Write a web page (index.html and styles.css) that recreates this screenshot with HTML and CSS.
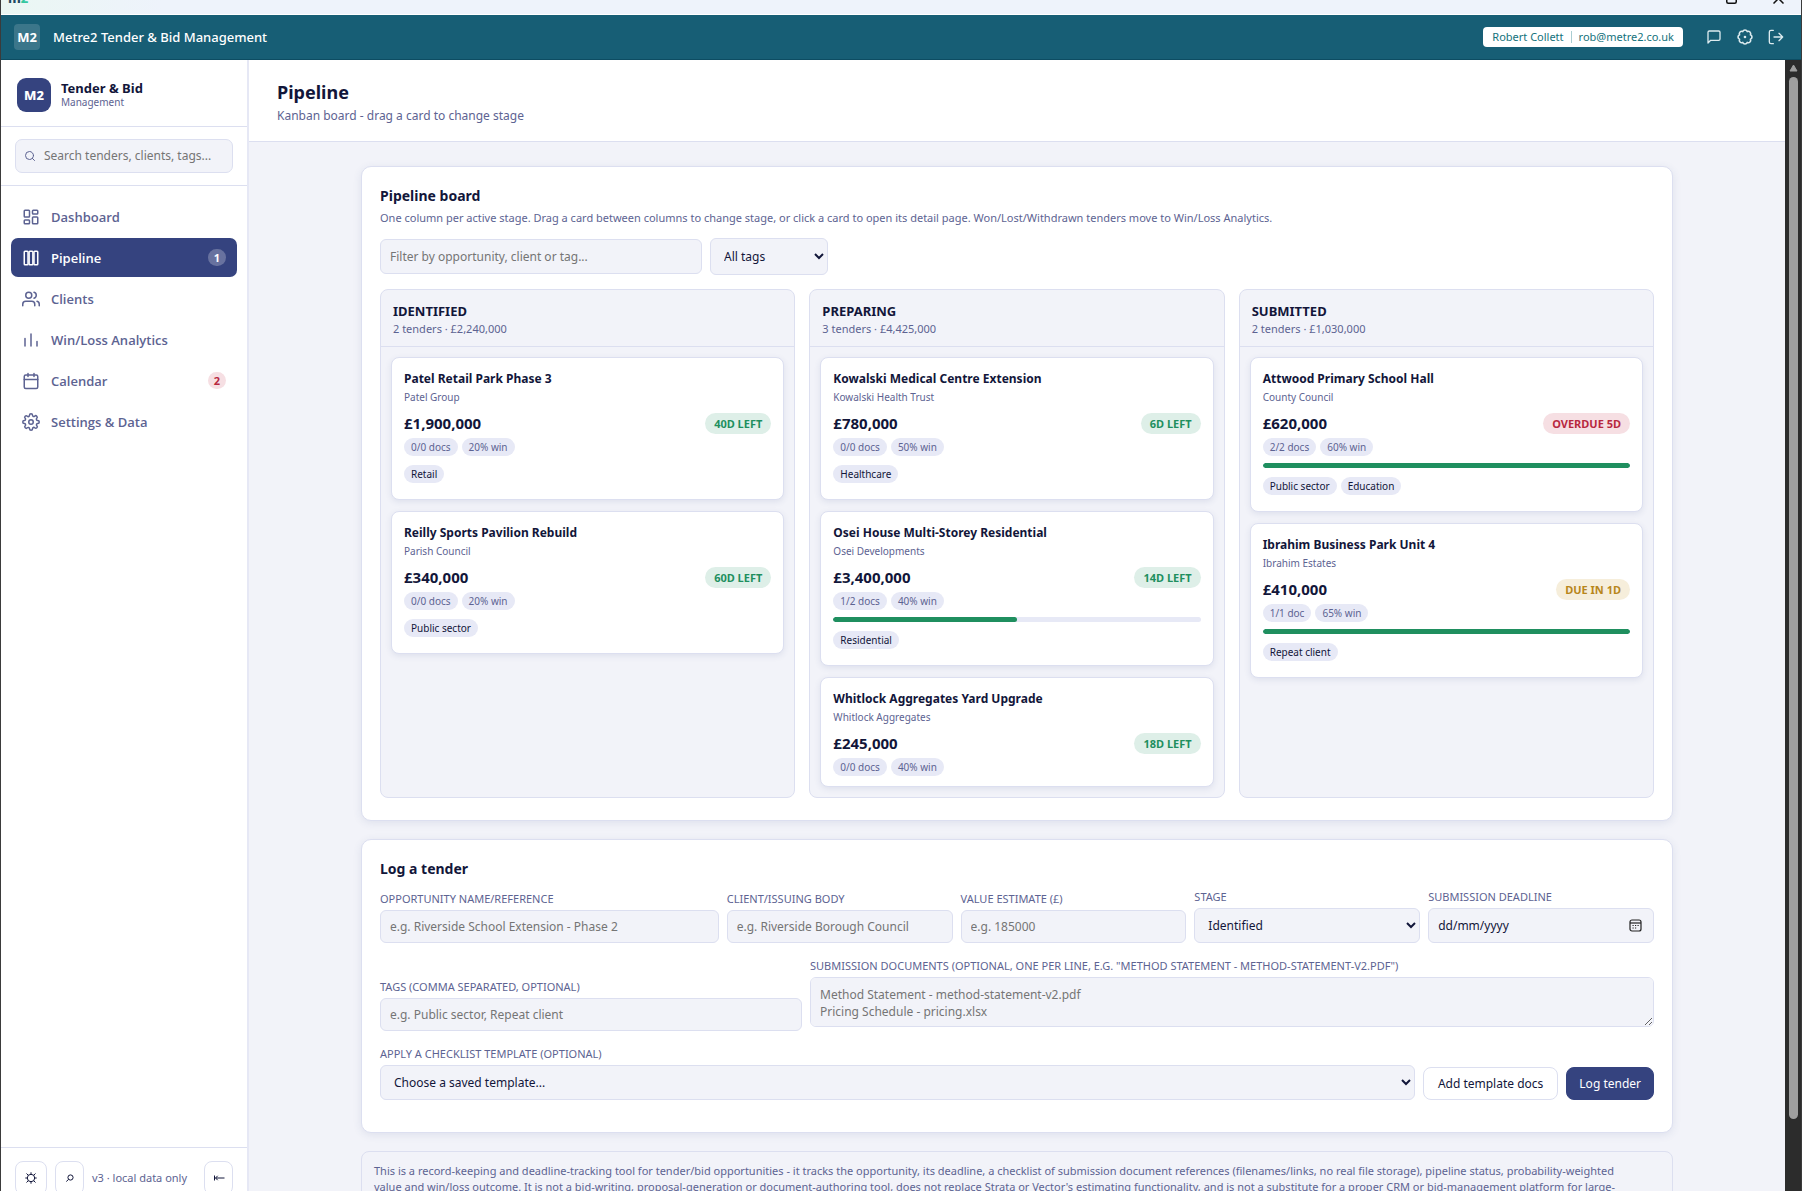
FILE: index.html
```html
<!DOCTYPE html>
<html lang="en-GB">
<head>
<meta charset="utf-8">
<meta name="viewport" content="width=device-width, initial-scale=1">
<title>Metre2 Tender &amp; Bid Management</title>
<link rel="stylesheet" href="styles.css">
</head>
<body>
<div class="window">
  <div class="titlebar">
    <span class="titlebar-logo">m<span class="titlebar-two">2</span></span>
    <span class="titlebar-controls">
      <svg width="11" height="11" viewBox="0 0 11 11"><rect x=".75" y=".75" width="9.5" height="9.5" rx="1.5"/></svg>
      <svg width="11" height="11" viewBox="0 0 11 11"><path d="M.5.5l10 10M10.500.5l-10 10"/></svg>
    </span>
  </div>

  <header class="topbar">
    <span class="topbar-logo">M2</span>
    <span class="topbar-title">Metre2 Tender &amp; Bid Management</span>
    <span class="user-pill"><span>Robert Collett</span><span class="user-mail">rob@metre2.co.uk</span></span>
    <nav class="topbar-actions" aria-label="Account">
      <button type="button" aria-label="Messages"><svg class="icon" viewBox="0 0 24 24"><path d="M21 15a2 2 0 0 1-2 2H7l-4 4V5a2 2 0 0 1 2-2h14a2 2 0 0 1 2 2z"/></svg></button>
      <button type="button" aria-label="Preferences"><svg class="icon" viewBox="0 0 24 24"><path d="M9.200 4.600a3 3 0 0 1 5.600 0 3 3 0 0 1 4 4 3 3 0 0 1 0 5.600 3 3 0 0 1-4 4 3 3 0 0 1-5.600 0 3 3 0 0 1-4-4 3 3 0 0 1 0-5.600 3 3 0 0 1 4-4z" transform="translate(-2.400 -1.680) scale(1.200)"/><circle cx="12" cy="12" r="1"/></svg></button>
      <button type="button" aria-label="Sign out"><svg class="icon" viewBox="0 0 24 24"><path d="M8 2H4.500A2.500 2.500 0 0 0 2 4.500v15A2.500 2.500 0 0 0 4.500 22H8M16.500 6.500 22 12l-5.500 5.500M22 12H9"/></svg></button>
    </nav>
  </header>

  <div class="body">
    <aside class="sidebar">
      <div class="brand">
        <span class="brand-logo">M2</span>
        <span class="brand-text"><strong>Tender &amp; Bid</strong><small>Management</small></span>
      </div>
      <div class="search">
        <label class="search-box">
          <svg class="icon" viewBox="0 0 24 24"><circle cx="11" cy="11" r="8"/><path d="m21 21-4.300-4.300"/></svg>
          <input type="search" placeholder="Search tenders, clients, tags..." aria-label="Search tenders, clients, tags">
        </label>
      </div>
      <nav class="nav" aria-label="Main">
        <a href="#dashboard"><svg class="icon" viewBox="0 0 24 24"><rect x="3" y="3" width="7" height="9" rx="1"/><rect x="14" y="3" width="7" height="5" rx="1"/><rect x="14" y="12" width="7" height="9" rx="1"/><rect x="3" y="16" width="7" height="5" rx="1"/></svg>Dashboard</a>
        <a href="#pipeline" class="active" aria-current="page"><svg class="icon" viewBox="0 0 24 24"><rect x="3" y="3" width="5" height="18" rx="1"/><rect x="9.500" y="3" width="5" height="18" rx="1"/><rect x="16" y="3" width="5" height="18" rx="1"/></svg>Pipeline<span class="count">1</span></a>
        <a href="#clients"><svg class="icon" viewBox="0 0 24 24"><path d="M17 21v-2a4 4 0 0 0-4-4H5a4 4 0 0 0-4 4v2"/><circle cx="9" cy="7" r="4"/><path d="M23 21v-2a4 4 0 0 0-3-3.870M16 3.130a4 4 0 0 1 0 7.750"/></svg>Clients</a>
        <a href="#analytics"><svg class="icon" viewBox="0 0 24 24"><path d="M4 20V10M12 20V4M20 20v-6"/></svg>Win/Loss Analytics</a>
        <a href="#calendar"><svg class="icon" viewBox="0 0 24 24"><rect x="3" y="4" width="18" height="18" rx="2"/><path d="M16 2v4M8 2v4M3 10h18"/></svg>Calendar<span class="count alert">2</span></a>
        <a href="#settings"><svg class="icon" viewBox="0 0 24 24"><circle cx="12" cy="12" r="3"/><path d="M19.400 15a1.650 1.650 0 0 0 .33 1.820l.06.06a2 2 0 0 1-2.830 2.830l-.06-.06a1.650 1.650 0 0 0-1.820-.33 1.650 1.650 0 0 0-1 1.510V21a2 2 0 0 1-4 0v-.09A1.650 1.650 0 0 0 9 19.400a1.650 1.650 0 0 0-1.820.33l-.06.06a2 2 0 0 1-2.830-2.830l.06-.06a1.650 1.650 0 0 0 .33-1.820 1.650 1.650 0 0 0-1.510-1H3a2 2 0 0 1 0-4h.09A1.650 1.650 0 0 0 4.600 9a1.650 1.650 0 0 0-.33-1.820l-.06-.06a2 2 0 0 1 2.830-2.830l.06.06a1.650 1.650 0 0 0 1.820.33H9a1.650 1.650 0 0 0 1-1.510V3a2 2 0 0 1 4 0v.09a1.650 1.650 0 0 0 1 1.510 1.650 1.650 0 0 0 1.820-.33l.06-.06a2 2 0 0 1 2.830 2.830l-.06.06a1.650 1.650 0 0 0-.33 1.820V9a1.650 1.650 0 0 0 1.510 1H21a2 2 0 0 1 0 4h-.09a1.650 1.650 0 0 0-1.510 1z"/></svg>Settings &amp; Data</a>
      </nav>
      <div class="sidebar-foot">
        <button type="button" class="tool" aria-label="Theme"><svg class="glyph" viewBox="0 0 14 14"><circle cx="7" cy="7" r="3.700"/><path d="M7 3.300V1.300M7 10.700v2M3.300 7h-2M10.700 7h2M4.300 4.300 2.500 2.500M9.700 4.300l1.800-1.800M4.300 9.700l-1.800 1.800M9.700 9.700l1.800 1.800"/></svg></button>
        <button type="button" class="tool small" aria-label="Find"><svg class="glyph" viewBox="0 0 14 14"><circle cx="7.500" cy="6.500" r="2.600"/><path d="M5.600 8.400 3.300 10.500"/></svg></button>
        <span class="version">v3 · local data only</span>
        <button type="button" class="tool small" aria-label="Collapse sidebar"><svg class="glyph" viewBox="0 0 14 14"><path d="M2.500 4.500v5M12.500 7H3.500M5.700 4.800 3.500 7l2.200 2.200"/></svg></button>
      </div>
    </aside>

    <main class="main">
      <div class="page-head">
        <h1>Pipeline</h1>
        <p>Kanban board - drag a card to change stage</p>
      </div>
      <div class="content">
        <section class="panel">
          <h2>Pipeline board</h2>
          <p class="hint">One column per active stage. Drag a card between columns to change stage, or click a card to open its detail page. Won/Lost/Withdrawn tenders move to Win/Loss Analytics.</p>
          <div class="filters">
            <input class="control filter-text" type="text" placeholder="Filter by opportunity, client or tag..." aria-label="Filter">
            <select class="control filter-tag" aria-label="Tag"><option>All tags</option></select>
          </div>
          <div class="board">
            <section class="column">
              <header><h3>Identified</h3><p>2 tenders · £2,240,000</p></header>
              <div class="cards">
                <article class="card">
                  <h4>Patel Retail Park Phase 3</h4><p class="client">Patel Group</p>
                  <div class="value-row"><b>£1,900,000</b><span class="due ok">40d left</span></div>
                  <div class="chips"><span>0/0 docs</span><span>20% win</span></div>
                  <div class="chips tags"><span>Retail</span></div>
                </article>
                <article class="card">
                  <h4>Reilly Sports Pavilion Rebuild</h4><p class="client">Parish Council</p>
                  <div class="value-row"><b>£340,000</b><span class="due ok">60d left</span></div>
                  <div class="chips"><span>0/0 docs</span><span>20% win</span></div>
                  <div class="chips tags"><span>Public sector</span></div>
                </article>
              </div>
            </section>
            <section class="column">
              <header><h3>Preparing</h3><p>3 tenders · £4,425,000</p></header>
              <div class="cards">
                <article class="card">
                  <h4>Kowalski Medical Centre Extension</h4><p class="client">Kowalski Health Trust</p>
                  <div class="value-row"><b>£780,000</b><span class="due ok">6d left</span></div>
                  <div class="chips"><span>0/0 docs</span><span>50% win</span></div>
                  <div class="chips tags"><span>Healthcare</span></div>
                </article>
                <article class="card">
                  <h4>Osei House Multi-Storey Residential</h4><p class="client">Osei Developments</p>
                  <div class="value-row"><b>£3,400,000</b><span class="due ok">14d left</span></div>
                  <div class="chips"><span>1/2 docs</span><span>40% win</span></div>
                  <div class="meter"><div style="width:50%"></div></div>
                  <div class="chips tags"><span>Residential</span></div>
                </article>
                <article class="card">
                  <h4>Whitlock Aggregates Yard Upgrade</h4><p class="client">Whitlock Aggregates</p>
                  <div class="value-row"><b>£245,000</b><span class="due ok">18d left</span></div>
                  <div class="chips"><span>0/0 docs</span><span>40% win</span></div>
                </article>
              </div>
            </section>
            <section class="column">
              <header><h3>Submitted</h3><p>2 tenders · £1,030,000</p></header>
              <div class="cards">
                <article class="card">
                  <h4>Attwood Primary School Hall</h4><p class="client">County Council</p>
                  <div class="value-row"><b>£620,000</b><span class="due late">Overdue 5d</span></div>
                  <div class="chips"><span>2/2 docs</span><span>60% win</span></div>
                  <div class="meter"><div style="width:100%"></div></div>
                  <div class="chips tags"><span>Public sector</span><span>Education</span></div>
                </article>
                <article class="card">
                  <h4>Ibrahim Business Park Unit 4</h4><p class="client">Ibrahim Estates</p>
                  <div class="value-row"><b>£410,000</b><span class="due soon">Due in 1d</span></div>
                  <div class="chips"><span>1/1 doc</span><span>65% win</span></div>
                  <div class="meter"><div style="width:100%"></div></div>
                  <div class="chips tags"><span>Repeat client</span></div>
                </article>
              </div>
            </section>
          </div>
        </section>

        <section class="panel">
          <h2>Log a tender</h2>
          <form class="form">
            <div class="row row-main">
              <div class="field"><label for="f-name">Opportunity name/reference</label><input class="control" id="f-name" type="text" placeholder="e.g. Riverside School Extension - Phase 2"></div>
              <div class="field"><label for="f-client">Client/issuing body</label><input class="control" id="f-client" type="text" placeholder="e.g. Riverside Borough Council"></div>
              <div class="field"><label for="f-value">Value estimate (£)</label><input class="control" id="f-value" type="text" inputmode="numeric" placeholder="e.g. 185000"></div>
              <div class="field"><label for="f-stage">Stage</label><select class="control" id="f-stage"><option>Identified</option><option>Preparing</option><option>Submitted</option></select></div>
              <div class="field"><label for="f-date">Submission deadline</label>
                <div class="control date"><input id="f-date" type="text" placeholder="dd/mm/yyyy"><button type="button" aria-label="Open calendar"><svg width="13" height="13" viewBox="0 0 13 13"><rect x="1" y="1" width="11" height="11" rx="2"/><path d="M1 4h11"/><path d="M6 6.500h1.200M8.500 6.500h1.200M3.500 9h1.200M6 9h1.200M3.500 6.500h1.200"/></svg></button></div></div>
            </div>
            <div class="row row-docs">
              <div class="field"><label for="f-tags">Tags (comma separated, optional)</label><input class="control" id="f-tags" type="text" placeholder="e.g. Public sector, Repeat client"></div>
              <div class="field docs"><label for="f-docs">Submission documents (optional, one per line, e.g. "Method Statement - method-statement-v2.pdf")</label><textarea class="control" id="f-docs" rows="2" placeholder="Method Statement - method-statement-v2.pdf&#10;Pricing Schedule - pricing.xlsx"></textarea></div>
            </div>
            <div class="row row-template">
              <div class="field"><label for="f-template">Apply a checklist template (optional)</label><select class="control" id="f-template"><option>Choose a saved template...</option></select></div>
              <button type="button" class="btn">Add template docs</button>
              <button type="submit" class="btn primary">Log tender</button>
            </div>
          </form>
        </section>

        <p class="notice">This is a record-keeping and deadline-tracking tool for tender/bid opportunities - it tracks the opportunity, its deadline, a checklist of submission document references (filenames/links, no real file storage), pipeline status, probability-weighted value and win/loss outcome. It is not a bid-writing, proposal-generation or document-authoring tool, does not replace Strata or Vector's estimating functionality, and is not a substitute for a proper CRM or bid-management platform for large-scale bidding.</p>
      </div>
    </main>

    <div class="scrollbar" aria-hidden="true">
      <svg width="9" height="8" viewBox="0 0 9 8"><path d="M4.500 1 8 7H1z"/></svg>
      <div class="thumb"></div>
    </div>
  </div>
</div>
</body>
</html>
```
FILE: styles.css
```css
:root {
  --ink: #12163a;
  --muted: #5d6392;
  --line: #dcdff0;
  --surface: #f2f3f9;
  --chip: #e7e9f6;
  --navy: #35437f;
  --teal: #175e75;
  --green: #1f8f5f;
}

* { box-sizing: border-box; }

body {
  margin: 0;
  height: 100vh;
  overflow: hidden;
  background: var(--surface);
  color: var(--ink);
  font: 13px/18px "Noto Sans", "Open Sans", sans-serif;
}

h1, h2, h3, h4, p { margin: 0; }
button, input, select, textarea { font: inherit; color: inherit; }

.window {
  display: flex;
  flex-direction: column;
  height: 100vh;
  overflow: hidden;
  border: solid #3b3b3b;
  border-width: 0 1px;
}

.icon {
  flex: none;
  fill: none;
  stroke: currentColor;
  stroke-width: 2;
  stroke-linecap: round;
  stroke-linejoin: round;
}

/* Window title bar, partly scrolled off the top edge */
.titlebar {
  flex: none;
  display: flex;
  align-items: center;
  justify-content: space-between;
  height: 33px;
  margin-top: -18px;
  padding: 0 17px 0 7px;
  background: linear-gradient(90deg, #eaf7f3, #eef3fb 160px);
  border-bottom: 1px solid #fff;
}
.titlebar-logo { font-weight: 800; font-size: 13px; line-height: 16px; color: #1d4a63; }
.titlebar-two { color: #35c7a0; }
.titlebar-controls { display: flex; gap: 36px; }
.titlebar-controls svg { fill: none; stroke: #111; stroke-width: 1.500; }

.topbar {
  flex: none;
  display: flex;
  align-items: center;
  height: 45px;
  padding: 0 10px 0 13px;
  background: var(--teal);
  border-bottom: 1px solid #0d4c62;
  color: #fff;
}
.topbar-logo {
  width: 26px;
  height: 26px;
  border-radius: 4px;
  background: #3b768a;
  font-weight: 700;
  line-height: 26px;
  text-align: center;
}
.topbar-title { margin-left: 13px; font-weight: 500; }
.user-pill {
  display: flex;
  align-items: center;
  margin-left: auto;
  padding: 0 9px;
  border-radius: 4px;
  background: #fff;
  color: #14727c;
  font-size: 11px;
  line-height: 20px;
}
.user-mail { display: flex; align-items: center; }
.user-mail::before { content: ""; height: 12px; margin: 0 7px; border-left: 1px solid #a9cdd2; }
.topbar-actions { display: flex; gap: 1px; margin-left: 16px; }
.topbar-actions button {
  display: grid;
  place-items: center;
  width: 30px;
  height: 30px;
  padding: 0;
  border: 0;
  background: none;
  color: #dcebef;
}
.topbar-actions .icon { width: 16px; height: 16px; }

.body { flex: 1; display: flex; min-height: 0; }

/* Sidebar */
.sidebar {
  flex: none;
  display: flex;
  flex-direction: column;
  width: 248px;
  background: #fff;
  border-right: 2px solid #e6e8f5;
}
.brand {
  display: flex;
  align-items: center;
  gap: 10px;
  height: 67px;
  padding: 3px 16px 0;
  border-bottom: 1px solid var(--line);
}
.brand-logo {
  width: 34px;
  height: 34px;
  border-radius: 9px;
  background: var(--navy);
  color: #fff;
  font-weight: 800;
  line-height: 35px;
  text-align: center;
}
.brand-text { display: flex; flex-direction: column; }
.brand-text strong { font-size: 13px; line-height: 16px; }
.brand-text small { font-size: 10px; line-height: 13px; color: var(--muted); }
.search { padding: 12px 14px; border-bottom: 1px solid var(--line); }
.search-box {
  display: flex;
  align-items: center;
  gap: 8px;
  height: 34px;
  padding: 0 8px;
  border: 1px solid var(--line);
  border-radius: 7px;
  background: var(--surface);
  color: var(--muted);
}
.search-box .icon { width: 12px; height: 12px; }
.search-box input { flex: 1; min-width: 0; padding: 0; border: 0; background: none; font-size: 12px; outline: 0; }
.nav { display: flex; flex-direction: column; gap: 2px; padding: 11px 10px; }
.nav a {
  display: flex;
  align-items: center;
  gap: 11px;
  height: 39px;
  padding: 0 11px;
  border-radius: 7px;
  color: var(--muted);
  font-family: "Open Sans", "Noto Sans", sans-serif;
  font-weight: 600;
  text-decoration: none;
}
.nav .icon { width: 18px; height: 18px; }
.nav .active { background: var(--navy); color: #fff; }
.count {
  min-width: 18px;
  margin-left: auto;
  border-radius: 9px;
  background: #68729f;
  font-size: 11px;
  font-weight: 700;
  line-height: 17px;
  text-align: center;
}
.count.alert { background: #f6dfe3; color: #b8283f; }
.sidebar-foot {
  display: flex;
  align-items: flex-start;
  gap: 8px;
  height: 44px;
  margin-top: auto;
  padding: 13px 14px;
  border-top: 1px solid var(--line);
}
.tool {
  flex: none;
  display: grid;
  place-items: center;
  width: 32px;
  height: 34px;
  padding: 0;
  border: 1px solid var(--line);
  border-radius: 8px;
  background: #fff;
}
.tool.small { width: 29px; }
.glyph { width: 14px; height: 14px; fill: none; stroke: var(--ink); stroke-width: 1; }
.version { flex: 1; font-size: 11px; line-height: 34px; color: var(--muted); white-space: nowrap; }

/* Main area */
.main { flex: 1; min-width: 0; overflow: hidden; }
.page-head {
  height: 82px;
  padding: 19px 28px 0;
  background: #fff;
  border-bottom: 1px solid var(--line);
}
.page-head h1 { font-size: 18px; line-height: 26px; font-weight: 700; }
.page-head p { margin-top: 2px; font-size: 12px; color: var(--muted); }
.content {
  display: flex;
  flex-direction: column;
  gap: 18px;
  max-width: 1360px;
  margin: 0 auto;
  padding: 24px;
}
.panel {
  padding: 18px;
  border: 1px solid var(--line);
  border-radius: 10px;
  background: #fff;
  box-shadow: 0 2px 8px rgb(53 67 127 / 10%);
}
.panel h2 { font-size: 14px; line-height: 22px; font-weight: 700; }
.hint { margin-top: 2px; font-size: 11px; line-height: 18px; color: var(--muted); }

.control {
  height: 33px;
  padding: 0 9px;
  border: 1px solid var(--line);
  border-radius: 6px;
  background: var(--surface);
  font-size: 12px;
  outline: 0;
}
.control::placeholder, .search-box input::placeholder { color: #757575; }
.filters { display: flex; align-items: center; gap: 8px; margin-top: 11px; }
.filter-text { width: 322px; height: 35px; }
.filter-tag { width: 118px; height: 37px; }

.board { display: grid; grid-template-columns: repeat(3, 1fr); gap: 14px; margin: 14px 0 4px; }
.column { border: 1px solid var(--line); border-radius: 8px; background: var(--surface); }
.column > header { padding: 12px 12px 9px; border-bottom: 1px solid var(--line); }
.column h3 { font-size: 13px; line-height: 18px; font-weight: 700; text-transform: uppercase; }
.column > header p { font-size: 11px; line-height: 17px; color: var(--muted); }
.cards { display: flex; flex-direction: column; gap: 11px; padding: 10px; }
.card {
  padding: 12px 12px 10px;
  border: 1px solid var(--line);
  border-radius: 8px;
  background: #fff;
  box-shadow: 0 2px 6px rgb(53 67 127 / 10%);
}
.card h4 { font-size: 12px; line-height: 18px; font-weight: 700; }
.client { margin-top: 2px; font-size: 10px; line-height: 14px; color: var(--muted); }
.value-row { display: flex; align-items: center; justify-content: space-between; margin-top: 9px; }
.value-row b { font-size: 15px; line-height: 21px; }
.due {
  padding: 0 9px;
  border-radius: 11px;
  font-size: 11px;
  font-weight: 700;
  line-height: 21px;
  text-transform: uppercase;
}
.due.ok { background: #deefe8; color: var(--green); }
.due.late { background: #f6dfe3; color: #b8283f; }
.due.soon { background: #f6eedb; color: #b8861b; }
.chips { display: flex; gap: 4px; margin-top: 4px; }
.chips span {
  padding: 0 7px;
  border-radius: 9px;
  background: var(--chip);
  color: var(--muted);
  font-size: 10px;
  line-height: 18px;
}
.chips.tags { margin: 9px 0 6px; }
.tags span { color: var(--ink); }
.meter { height: 5px; margin-top: 7px; border-radius: 3px; background: var(--chip); overflow: hidden; }
.meter div { height: 100%; border-radius: 3px; background: var(--green); }

/* Tender form */
.form { display: flex; flex-direction: column; gap: 15px; margin: 9px 0 14px; }
.row { display: grid; align-items: end; gap: 8px; }
.row-main { grid-template-columns: 3fr 2fr 2fr 2fr 2fr; }
.row-docs { grid-template-columns: 1fr 2fr; }
.row-template { grid-template-columns: 1fr auto auto; }
.field { display: flex; flex-direction: column; min-width: 0; }
.field label {
  margin-bottom: 3px;
  color: var(--muted);
  font-size: 11px;
  line-height: 16px;
  text-transform: uppercase;
  white-space: nowrap;
}
.field select.control, .date.control { height: 35px; }
.date { display: flex; align-items: center; }
.date input { flex: 1; min-width: 0; padding: 0; border: 0; background: none; outline: 0; }
.date input::placeholder { color: var(--ink); }
.date button { display: flex; padding: 0 2px; border: 0; background: none; }
.date svg { fill: none; stroke: #222; stroke-width: 1.200; }
.field textarea.control { height: 50px; padding: 8px 9px; line-height: 17px; resize: vertical; }
.docs { padding-bottom: 4px; }
.btn {
  height: 33px;
  padding: 0 14px;
  border: 1px solid var(--line);
  border-radius: 8px;
  background: #fff;
  font-size: 12px;
}
.btn.primary { padding: 0 12px; border-color: var(--navy); background: var(--navy); color: #fff; }

.notice {
  padding: 11px 46px 11px 12px;
  border: 1px solid var(--line);
  border-radius: 8px;
  font-size: 11px;
  line-height: 16px;
  color: var(--muted);
}

/* Scroll bar */
.scrollbar {
  flex: none;
  display: flex;
  flex-direction: column;
  align-items: center;
  gap: 5px;
  width: 16px;
  padding-top: 4px;
  background: #2c2c2c;
}
.scrollbar svg { fill: #9f9f9f; stroke: #9f9f9f; stroke-linejoin: round; }
.thumb { width: 9px; height: 92.5%; border-radius: 5px; background: #9f9f9f; }
```
